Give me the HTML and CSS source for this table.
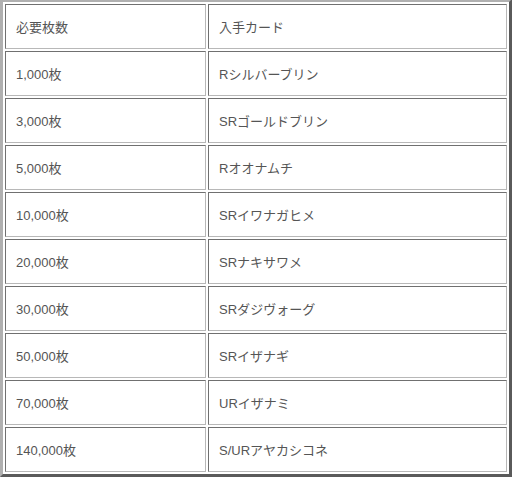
FILE: index.html
```html
<!DOCTYPE html>
<html lang="ja">
<head>
<meta charset="utf-8">
<link rel="stylesheet" href="styles.css">
</head>
<body>
<table class="cards">
  <tr><td class="c1">必要枚数</td><td class="c2">入手カード</td></tr>
  <tr><td class="c1">1,000枚</td><td class="c2">Rシルバーブリン</td></tr>
  <tr><td class="c1">3,000枚</td><td class="c2">SRゴールドブリン</td></tr>
  <tr><td class="c1">5,000枚</td><td class="c2">Rオオナムチ</td></tr>
  <tr><td class="c1">10,000枚</td><td class="c2">SRイワナガヒメ</td></tr>
  <tr><td class="c1">20,000枚</td><td class="c2">SRナキサワメ</td></tr>
  <tr><td class="c1">30,000枚</td><td class="c2">SRダジヴォーグ</td></tr>
  <tr><td class="c1">50,000枚</td><td class="c2">SRイザナギ</td></tr>
  <tr><td class="c1">70,000枚</td><td class="c2">URイザナミ</td></tr>
  <tr><td class="c1">140,000枚</td><td class="c2">S/URアヤカシコネ</td></tr>
</table>
</body>
</html>
```
FILE: styles.css
```css
html, body {
  margin: 0;
  padding: 0;
  background: #fff;
}
.cards {
  width: 512px;
  margin-top: -1px;
  border-collapse: separate;
  border-spacing: 2px;
  border-style: solid;
  border-width: 3px;
  border-color: #b0b0b0 #5a5a5a #5a5a5a #b0b0b0;
  font-family: "Liberation Sans", "Noto Sans CJK JP", sans-serif;
  font-size: 13px;
  color: #555;
}
.cards td {
  padding: 0 10px;
  box-sizing: border-box;
  height: 45px;
  border-style: solid;
  border-width: 1px;
  border-color: #707070 #b8b8b8 #b8b8b8 #707070;
  vertical-align: middle;
  text-align: left;
}
.c1 {
  width: 201px;
}
```
